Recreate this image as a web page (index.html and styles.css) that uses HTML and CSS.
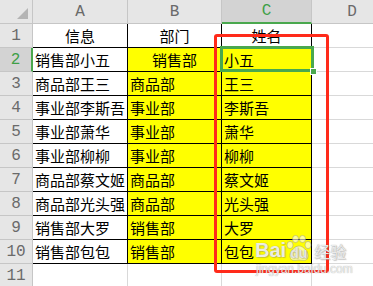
FILE: index.html
```html
<!DOCTYPE html>
<html>
<head>
<meta charset="utf-8">
<link rel="stylesheet" href="styles.css">
</head>
<body>
<div class="sheet">
  <div class="grid">
    <div class="corner"><span class="tri"></span></div>
    <div class="colh">A</div>
    <div class="colh">B</div>
    <div class="colh sel">C</div>
    <div class="colh last">D</div>

    <div class="rowh">1</div>
    <div class="cell b center">信息</div>
    <div class="cell b center">部门</div>
    <div class="cell b center">姓名</div>
    <div class="cell"></div>

    <div class="rowh sel">2</div>
    <div class="cell b">销售部小五</div>
    <div class="cell b y center">销售部</div>
    <div class="cell b y">小五</div>
    <div class="cell"></div>

    <div class="rowh">3</div>
    <div class="cell b">商品部王三</div>
    <div class="cell b y">商品部</div>
    <div class="cell b y">王三</div>
    <div class="cell"></div>

    <div class="rowh">4</div>
    <div class="cell b">事业部李斯吾</div>
    <div class="cell b y">事业部</div>
    <div class="cell b y">李斯吾</div>
    <div class="cell"></div>

    <div class="rowh">5</div>
    <div class="cell b">事业部萧华</div>
    <div class="cell b y">事业部</div>
    <div class="cell b y">萧华</div>
    <div class="cell"></div>

    <div class="rowh">6</div>
    <div class="cell b">事业部柳柳</div>
    <div class="cell b y">事业部</div>
    <div class="cell b y">柳柳</div>
    <div class="cell"></div>

    <div class="rowh">7</div>
    <div class="cell b">商品部蔡文姬</div>
    <div class="cell b y">商品部</div>
    <div class="cell b y">蔡文姬</div>
    <div class="cell"></div>

    <div class="rowh">8</div>
    <div class="cell b">商品部光头强</div>
    <div class="cell b y">商品部</div>
    <div class="cell b y">光头强</div>
    <div class="cell"></div>

    <div class="rowh">9</div>
    <div class="cell b">销售部大罗</div>
    <div class="cell b y">销售部</div>
    <div class="cell b y">大罗</div>
    <div class="cell"></div>

    <div class="rowh">10</div>
    <div class="cell b">销售部包包</div>
    <div class="cell b y">销售部</div>
    <div class="cell b y">包包</div>
    <div class="cell"></div>

    <div class="rowh">11</div>
    <div class="cell"></div>
    <div class="cell"></div>
    <div class="cell"></div>
    <div class="cell"></div>
  </div>

  <div class="selbox"><span class="handle"></span></div>
  <div class="redbox"></div>
  <div class="wm">
    <div class="wm-top">
      <span class="bai">Bai</span>
      <span class="pawwrap">
        <svg class="paw" width="26" height="27" viewBox="0 0 26 27"><ellipse cx="4" cy="10" rx="3" ry="3.6"/><ellipse cx="9.5" cy="4" rx="3" ry="3.6"/><ellipse cx="16.5" cy="4" rx="3" ry="3.6"/><ellipse cx="22" cy="10" rx="3" ry="3.6"/><path d="M13 11 C8 11 3 18 4 22 C5 27 10 25 13 25 C16 25 21 27 22 22 C23 18 18 11 13 11Z"/></svg>
        <span class="du">du</span>
      </span>
      <span class="jy">经验</span>
    </div>
    <div class="wm-url">jingyan.baidu.com</div>
  </div>
</div>
</body>
</html>
```
FILE: styles.css
```css
html, body {
  margin: 0;
  padding: 0;
  background: #ffffff;
}
.sheet {
  position: relative;
  width: 373px;
  height: 286px;
  overflow: hidden;
  font-family: "Noto Sans CJK SC", "Noto Sans", sans-serif;
}
.grid {
  display: grid;
  grid-template-columns: 33px 95px 94px 90px 80px;
  grid-template-rows: 24px repeat(11, 24px);
}
.corner {
  background: #e6e6e6;
  border-right: 1px solid #c6c6c6;
  border-bottom: 1px solid #c6c6c6;
  position: relative;
}
.tri {
  position: absolute;
  right: 4px;
  bottom: 4px;
  width: 0;
  height: 0;
  border-left: 11px solid transparent;
  border-bottom: 11px solid #b4b4b4;
}
.colh {
  background: #e6e6e6;
  border-right: 1px solid #c6c6c6;
  border-bottom: 1px solid #c6c6c6;
  color: #6a6a6a;
  font-family: "Liberation Mono", "DejaVu Sans Mono", monospace;
  font-size: 16px;
  display: flex;
  align-items: center;
  justify-content: center;
  line-height: 1;
}
.colh.sel {
  background: #d3d3d3;
  color: #3f9f47;
  border-bottom: 2px solid #4aa84e;
}
.colh.last {
  border-right: none;
}
.rowh {
  background: #e6e6e6;
  border-right: 1px solid #c6c6c6;
  border-bottom: 1px solid #c6c6c6;
  color: #6a6a6a;
  font-family: "Liberation Mono", "DejaVu Sans Mono", monospace;
  font-size: 16px;
  display: flex;
  align-items: center;
  justify-content: center;
  line-height: 1;
}
.rowh.sel {
  background: #d3d3d3;
  color: #3f9f47;
  border-right: 2px solid #4aa84e;
}
.cell {
  border-right: 1px solid #d9d9d9;
  border-bottom: 1px solid #d9d9d9;
  font-size: 15px;
  color: #000;
  display: flex;
  align-items: center;
  padding-left: 2px;
  line-height: 1;
  white-space: nowrap;
  overflow: hidden;
}
.cell.b {
  border-right-color: #000;
  border-bottom-color: #000;
}
.cell.y {
  background: #ffff00;
}
.cell.center {
  justify-content: center;
  padding-left: 0;
}
.selbox {
  position: absolute;
  left: 220px;
  top: 46px;
  width: 88px;
  height: 20px;
  border: 3px solid #4aa84e;
}
.handle {
  position: absolute;
  right: -6px;
  bottom: -6px;
  width: 5px;
  height: 5px;
  background: #4aa84e;
  border: 1px solid #fff;
}
.redbox {
  position: absolute;
  left: 214px;
  top: 34px;
  width: 109px;
  height: 233px;
  border: 3px solid #ff2a1a;
  border-radius: 3px;
}
.wm {
  position: absolute;
  left: 255px;
  top: 235px;
  width: 110px;
  color: rgba(250, 250, 250, 0.9);
  text-shadow: 0 0 1px rgba(90, 90, 90, 0.6), 1px 1px 1px rgba(120, 120, 120, 0.35);
}
.wm-top {
  display: flex;
  align-items: flex-end;
  height: 27px;
}
.bai {
  font-family: "Liberation Sans", Arial, sans-serif;
  font-weight: bold;
  font-size: 20px;
  line-height: 20px;
  margin-bottom: 2px;
}
.pawwrap {
  position: relative;
  width: 26px;
  height: 27px;
  flex: none;
}
.paw {
  display: block;
  fill: rgba(255, 255, 255, 0.6);
  stroke: rgba(140, 140, 140, 0.55);
  stroke-width: 0.8;
}
.du {
  position: absolute;
  left: 4px;
  bottom: 2px;
  font-family: "Liberation Sans", Arial, sans-serif;
  font-weight: bold;
  font-size: 14px;
  line-height: 14px;
  color: rgba(235, 235, 235, 0.95);
}
.jy {
  font-family: "Noto Sans CJK SC", sans-serif;
  font-size: 16px;
  line-height: 18px;
  margin-left: 2px;
  margin-bottom: 2px;
  color: rgba(240, 240, 240, 0.95);
}
.wm-url {
  font-family: "Liberation Sans", Arial, sans-serif;
  font-size: 12px;
  line-height: 12px;
  margin-left: 1px;
  margin-top: 1px;
  color: rgba(245, 245, 245, 0.9);
  text-shadow: 0 0 1px rgba(110, 110, 110, 0.7);
}
```
